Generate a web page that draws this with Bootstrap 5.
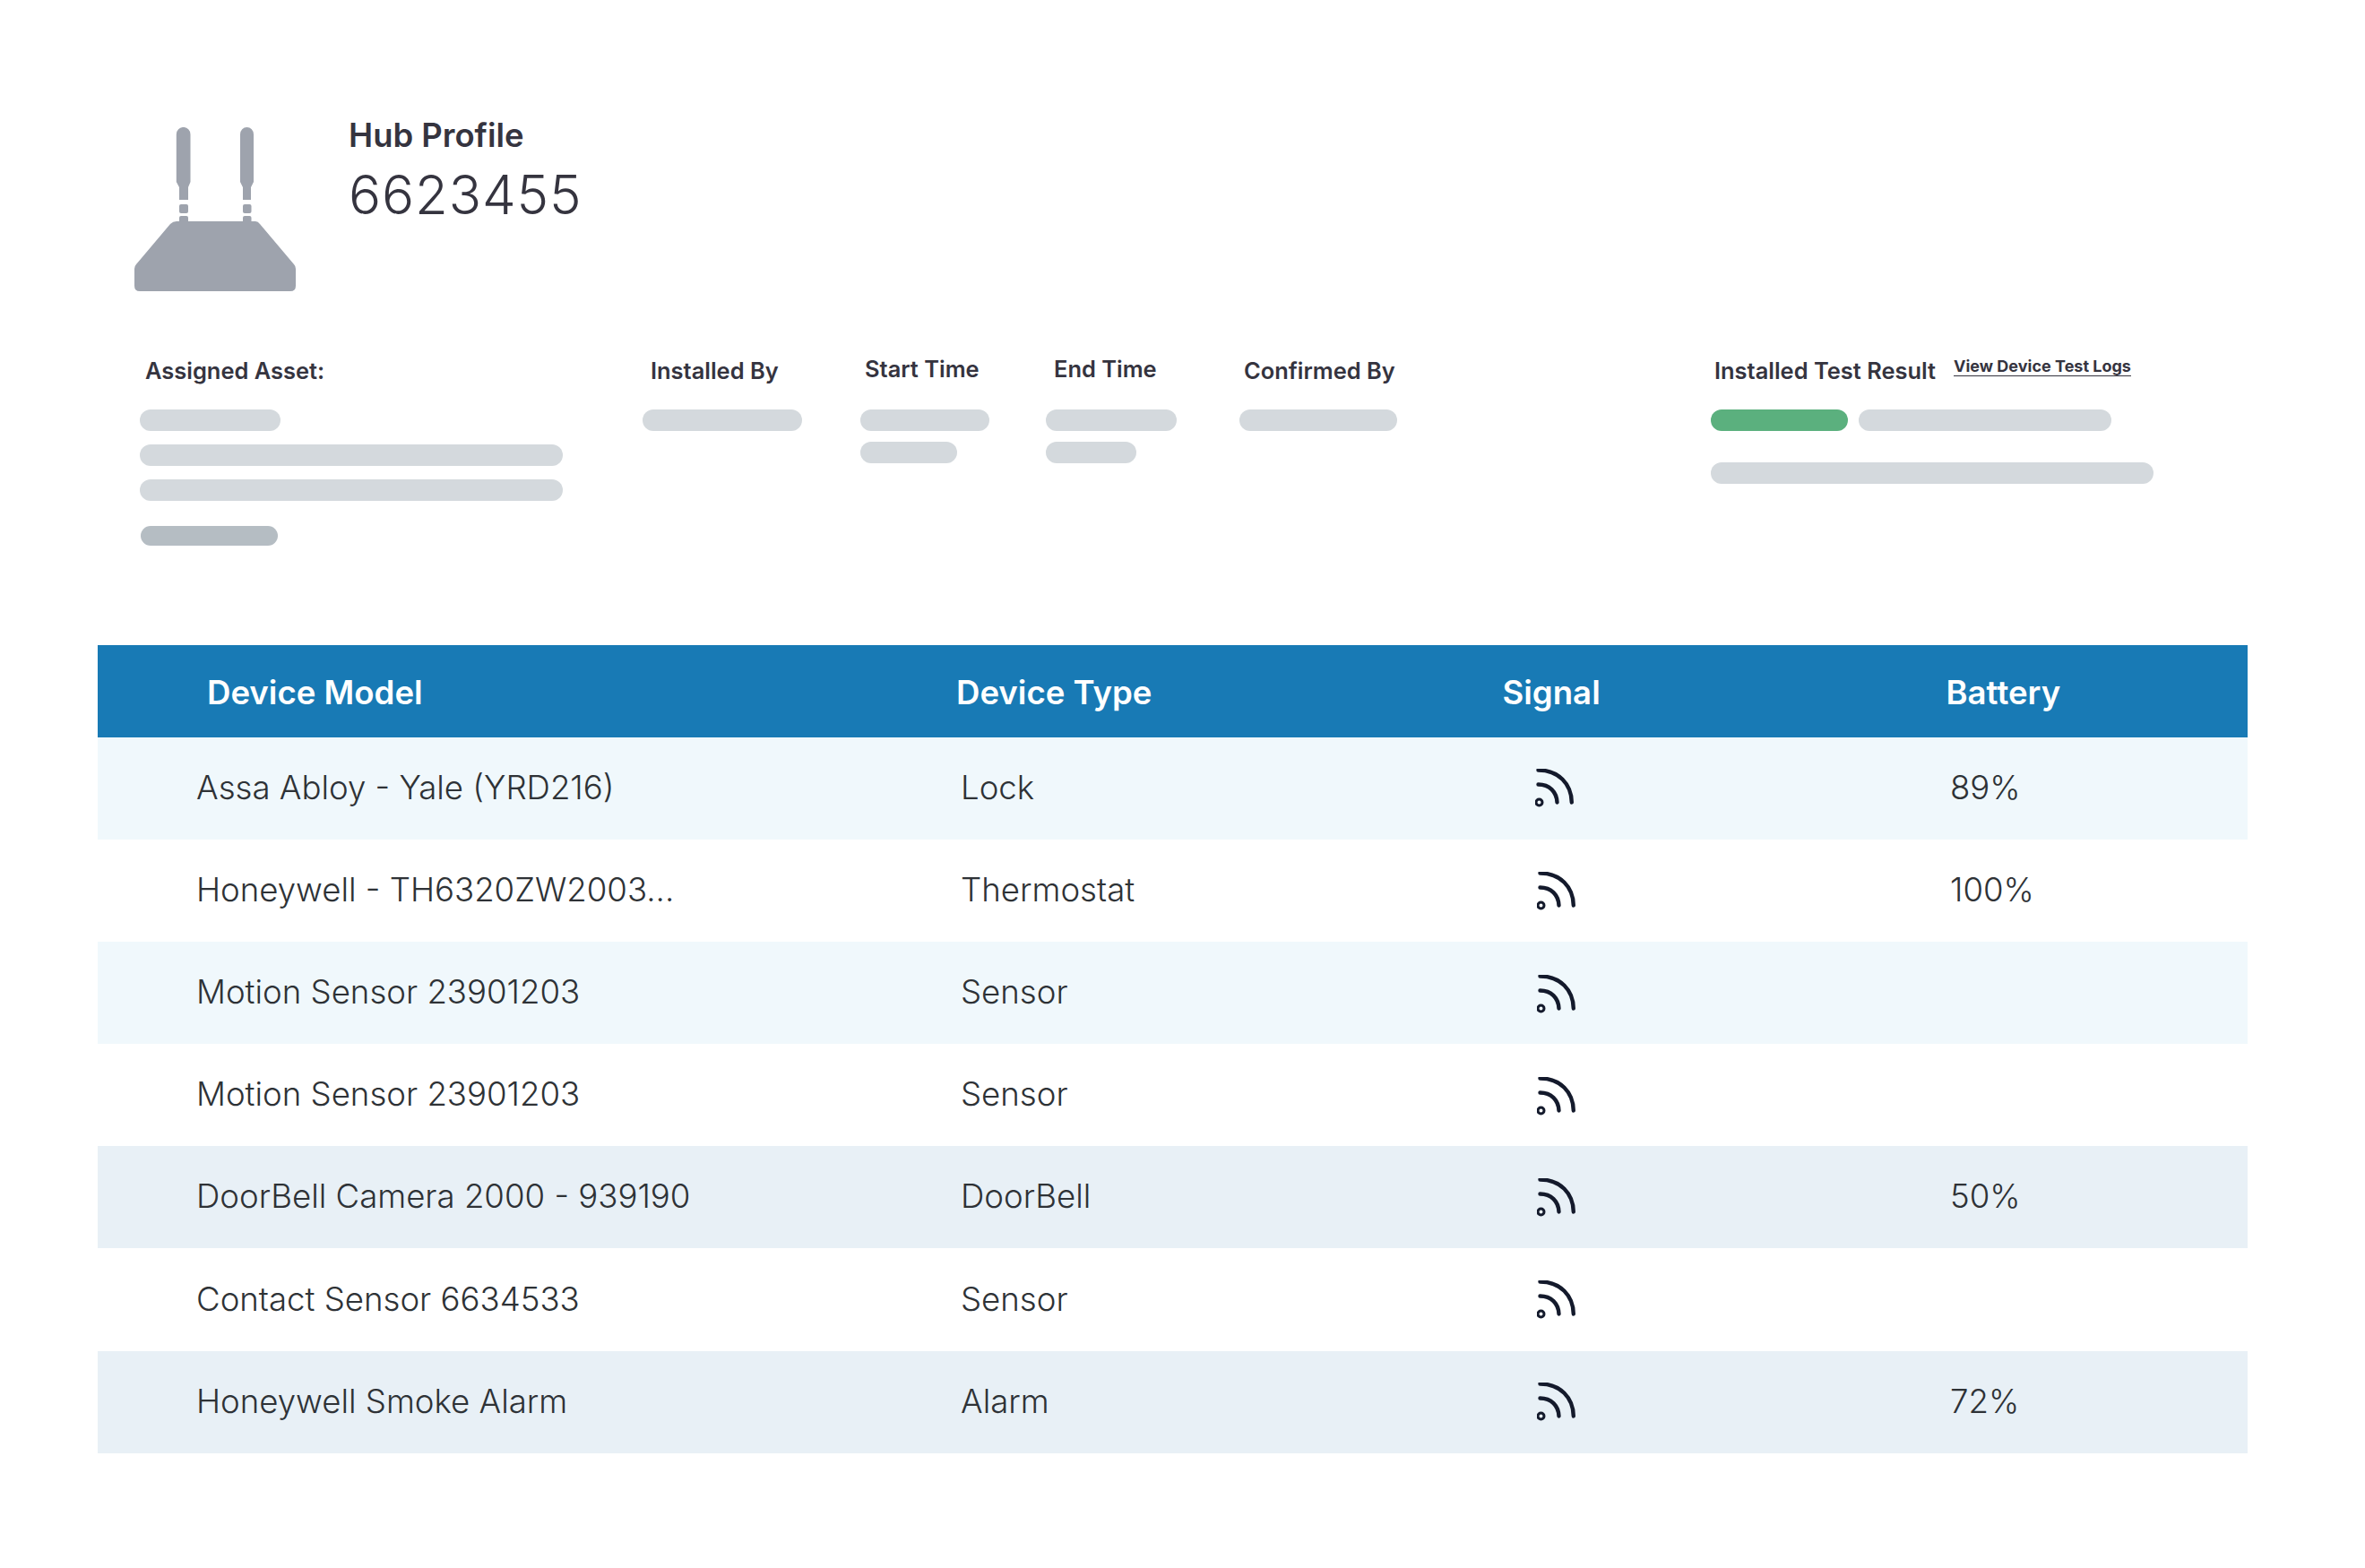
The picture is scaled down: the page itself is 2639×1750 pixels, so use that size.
<!DOCTYPE html>
<html lang="en">
<head>
<meta charset="utf-8">
<title>Hub Profile</title>
<link href="https://cdn.jsdelivr.net/npm/bootstrap@5.3.0/dist/css/bootstrap.min.css" rel="stylesheet">
<style>
html,body{background:#fff;font-family:Inter,"Noto Sans",sans-serif;color:#35343f;}
.sheet{width:2399px;margin-left:109px;padding-top:137px;height:1750px;overflow:hidden;}
.hub-head{padding-left:41px;height:268px;gap:59px;}
.hub-icon{width:180px;height:183px;margin-top:5px;flex:none;}
.hub-title{font-size:36.400px;font-weight:600;line-height:26px;margin:0;padding-top:1px;}
.hub-num{font-size:60px;font-weight:350;line-height:44px;margin-top:31px;letter-spacing:.9px;}
.info{height:315px;padding-left:47px;}
.info-col{flex:none;}
.w1{width:561px}.w2{width:243px}.w3{width:207px}.w4{width:216px}.w5{width:526px}.w6{width:494px}
.lab{font-size:25.450px;font-weight:600;line-height:18px;height:18px;margin-bottom:34px;white-space:nowrap;}
.ind7{padding-left:6px}.ind9{padding-left:9px}.ind5{padding-left:5px}.ind10{padding-left:9px}.ind4{padding-left:4px}
.up2{position:relative;top:-2px}
.logs{font-size:18px;font-weight:700;color:#35343f;margin-left:20px;position:relative;top:-8px;text-underline-offset:4px;}
.ph{height:24px;border-radius:12px;background:#d4d9dd;}
.g15{margin-bottom:15px}.g12{margin-bottom:12px}.g28{margin-bottom:28px}.g35{margin-bottom:35px}
.ph-dark{background:#b5bdc3;height:22px;width:153px;margin-left:1px;}
.ph-green{background:#5bb07e;width:153px;}
.hub-table{table-layout:fixed;width:2399px;margin:0;border-collapse:collapse;}
.hub-table th,.hub-table td{border:0;padding:0;vertical-align:middle;box-shadow:none;}
.hub-table thead th{background:#187ab5;color:#fff;font-size:36.600px;font-weight:600;height:103px;padding-top:4px;}
.hub-table tbody td{font-size:36.600px;font-weight:350;color:#2e3236;height:114.1px;padding-bottom:1px;}
.c1{width:951px}.c2{width:600px}.c3{width:500px}.c4{width:348px}
.hub-table th.c1{padding-left:122px}.hub-table td.c1{padding-left:110px}
.hub-table th.c2{padding-left:7px}.hub-table td.c2{padding-left:12px}
.hub-table th.c3{padding-left:16.500px}.hub-table td.c3{padding:1px 0 0 54.500px}
.hub-table th.c4{padding-left:11.500px}.hub-table td.c4{padding-left:16px}
.hub-table tr.tint-a td{background:#f0f8fc}
.hub-table tr.tint-b td{background:#e8f0f6}
.hub-table tr.tint-w td{background:#fff}
.hub-table td.sig-first{padding:0 0 0 53px}
.hub-table td.sig-low{padding-top:4px}
.hub-table td.sig-mid{padding-top:2px}
.sig{width:44px;height:44px;display:block;}
</style>
</head>
<body>
<svg width="0" height="0" class="position-absolute">
<symbol id="sig" viewBox="0 0 44 44">
<circle cx="4.500" cy="37.500" r="3.500" fill="none" stroke="#141a2c" stroke-width="3"/>
<path d="M3.500 17.500C16 17.500 24 26 24.500 37.500M3.500 1.500C26 1.500 40.500 17 40.800 37.500" fill="none" stroke="#141a2c" stroke-width="4.400" stroke-linecap="round"/>
</symbol>
</svg>
<div class="sheet">
  <div class="d-flex hub-head">
    <svg class="hub-icon" viewBox="0 0 180 183" fill="#9ea3ad" aria-hidden="true">
      <path d="M46.800 8a7.800 8 0 0 1 15.700 0V61L60 67V81H50V67L46.800 61Z"/>
      <path d="M118 8a7.500 8 0 0 1 15 0V61L130 67V81H121V67L118 61Z"/>
      <rect x="50" y="86" width="10" height="10" rx="2"/>
      <rect x="121" y="86" width="9.500" height="10" rx="2"/>
      <rect x="50" y="99" width="10" height="10" rx="2"/>
      <rect x="121" y="99" width="9.500" height="10" rx="2"/>
      <path d="M47 105H135Q138 105 140 108L178 153Q180 155 180 158V177Q180 183 174 183H6Q0 183 0 177V158Q0 155 2 153L40 108Q43 105 47 105Z"/>
    </svg>
    <div>
      <h1 class="hub-title">Hub Profile</h1>
      <div class="hub-num">6623455</div>
    </div>
  </div>
  <div class="d-flex info">
    <div class="info-col w1">
      <div class="lab ind7">Assigned Asset:</div>
      <div class="ph g15" style="width:157px"></div>
      <div class="ph g15" style="width:472px"></div>
      <div class="ph g28" style="width:472px"></div>
      <div class="ph ph-dark"></div>
    </div>
    <div class="info-col w2">
      <div class="lab ind9">Installed By</div>
      <div class="ph" style="width:178px"></div>
    </div>
    <div class="info-col w3">
      <div class="lab ind5 up2">Start Time</div>
      <div class="ph g12" style="width:144px"></div>
      <div class="ph" style="width:108px"></div>
    </div>
    <div class="info-col w4">
      <div class="lab ind10 up2">End Time</div>
      <div class="ph g12" style="width:146px"></div>
      <div class="ph" style="width:101px"></div>
    </div>
    <div class="info-col w5">
      <div class="lab ind5">Confirmed By</div>
      <div class="ph" style="width:176px"></div>
    </div>
    <div class="info-col w6">
      <div class="lab ind4">Installed Test Result<a href="#" class="logs">View Device Test Logs</a></div>
      <div class="d-flex gap-0 g35">
        <div class="ph ph-green me-3"></div>
        <div class="ph" style="width:282px;margin-left:-4px"></div>
      </div>
      <div class="ph" style="width:494px"></div>
    </div>
  </div>
  <table class="table hub-table">
    <thead>
      <tr><th class="c1">Device Model</th><th class="c2">Device Type</th><th class="c3">Signal</th><th class="c4">Battery</th></tr>
    </thead>
    <tbody>
      <tr class="tint-a"><td class="c1">Assa Abloy - Yale (YRD216)</td><td class="c2">Lock</td><td class="c3 sig-first"><svg class="sig"><use href="#sig"/></svg></td><td class="c4">89%</td></tr>
      <tr class="tint-w"><td class="c1">Honeywell - TH6320ZW2003...</td><td class="c2">Thermostat</td><td class="c3 sig-mid"><svg class="sig"><use href="#sig"/></svg></td><td class="c4">100%</td></tr>
      <tr class="tint-a"><td class="c1">Motion Sensor 23901203</td><td class="c2">Sensor</td><td class="c3 sig-low"><svg class="sig"><use href="#sig"/></svg></td><td class="c4"></td></tr>
      <tr class="tint-w"><td class="c1">Motion Sensor 23901203</td><td class="c2">Sensor</td><td class="c3 sig-low"><svg class="sig"><use href="#sig"/></svg></td><td class="c4"></td></tr>
      <tr class="tint-b"><td class="c1">DoorBell Camera 2000 - 939190</td><td class="c2">DoorBell</td><td class="c3"><svg class="sig"><use href="#sig"/></svg></td><td class="c4">50%</td></tr>
      <tr class="tint-w"><td class="c1">Contact Sensor 6634533</td><td class="c2">Sensor</td><td class="c3"><svg class="sig"><use href="#sig"/></svg></td><td class="c4"></td></tr>
      <tr class="tint-b"><td class="c1">Honeywell Smoke Alarm</td><td class="c2">Alarm</td><td class="c3"><svg class="sig"><use href="#sig"/></svg></td><td class="c4">72%</td></tr>
    </tbody>
  </table>
</div>
<script src="https://cdn.jsdelivr.net/npm/bootstrap@5.3.0/dist/js/bootstrap.bundle.min.js"></script>
</body>
</html>
